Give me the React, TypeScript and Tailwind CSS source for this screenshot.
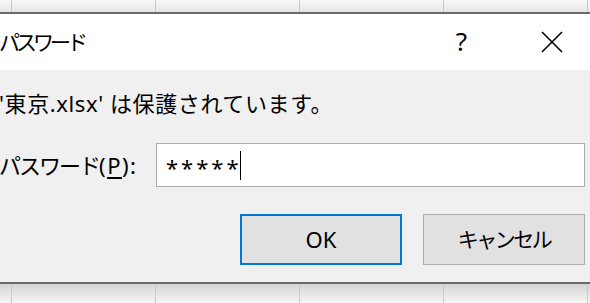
const font = { fontFamily: '"Noto Sans", "Noto Sans CJK JP", sans-serif' };

function GridStrip() {
  return (
    <div className="flex h-full">
      <div className="w-[12px] shrink-0 border-r border-[#c8c8c8]" />
      {[0, 1, 2, 3].map((i) => (
        <div key={i} className="w-[144px] shrink-0 border-r border-[#c8c8c8]" />
      ))}
    </div>
  );
}

function Kana({ children, className = "tracking-[-2.5px]" }: { children: React.ReactNode; className?: string }) {
  return <span className={className}>{children}</span>;
}

export default function App() {
  return (
    <div className="w-[590px] h-[303px] overflow-hidden flex flex-col text-[#000]" style={font}>
      {/* sheet behind, top */}
      <div className="h-[12px] bg-gradient-to-b from-[#f8f8f8] to-[#e6e6e6]">
        <GridStrip />
      </div>

      {/* dialog */}
      <div className="flex flex-col border-y-2 border-[#6b6b6b]">
        {/* title bar */}
        <div className="h-[56px] bg-white flex items-center">
          <span className="text-[21px] leading-none ml-[-1px]">
            <Kana className="tracking-[-4px]">パスワード</Kana>
          </span>
          <span className="ml-auto text-[26px] leading-none mr-[74px] mt-[-2px]">?</span>
          <svg width="22" height="22" viewBox="0 0 22 22" className="mr-[27px]">
            <path d="M1 1 L21 21 M21 1 L1 21" stroke="#000" strokeWidth="1.6" fill="none" />
          </svg>
        </div>

        {/* body */}
        <div className="h-[212px] bg-[#f0f0f0] flex flex-col">
          <div className="mt-[20px] h-[26px] text-[22px] leading-[26px] tracking-[0.6px] ml-[-1px] whitespace-nowrap">
            '東京.xlsx' は保護されています。
          </div>

          <div className="mt-[27px] flex items-center">
            <span className="w-[157px] shrink-0 text-[22px] leading-none ml-[-1px] whitespace-nowrap">
              <Kana className="tracking-[-2px]">パスワード</Kana>
              <span className="tracking-[1.5px]">
                (<span className="underline underline-offset-[3px]">P</span>):
              </span>
            </span>
            <div className="w-[429px] h-[44px] bg-white border border-[#ababab] flex items-center pl-[9px]">
              <span className="text-[22px] tracking-[3px] leading-none mt-[3px]">*****</span>
              <span className="w-px h-[29px] bg-black ml-[-2px]" />
            </div>
          </div>

          <div className="mt-[27px] flex justify-end gap-[21px] pr-[5px]">
            <button className="w-[162px] h-[51px] bg-[#e1e1e1] border-2 border-[#0078d7] text-[22px]">
              OK
            </button>
            <button className="w-[162px] h-[51px] bg-[#e1e1e1] border border-[#adadad] text-[21px]">
              <Kana>キャンセル</Kana>
            </button>
          </div>
        </div>
      </div>

      {/* sheet behind, bottom */}
      <div className="flex-1 bg-gradient-to-b from-[#d4d4d4] to-[#f6f6f6]">
        <GridStrip />
      </div>
    </div>
  );
}
